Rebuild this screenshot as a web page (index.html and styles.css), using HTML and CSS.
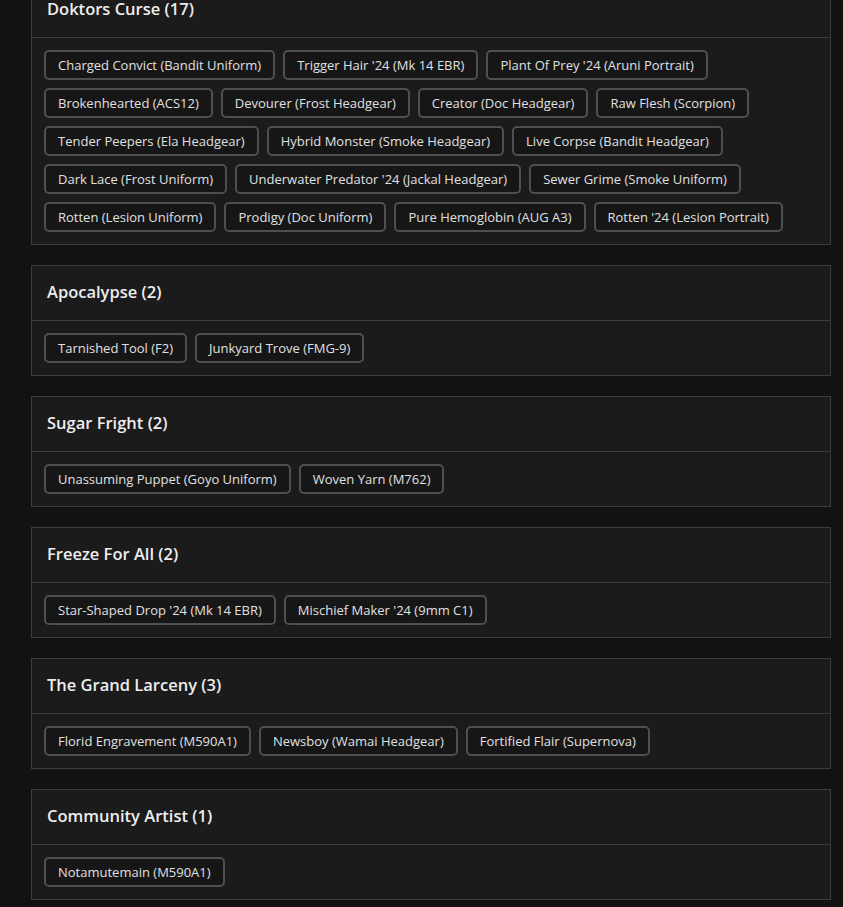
FILE: index.html
```html
<!DOCTYPE html>
<html>
<head>
<meta charset="utf-8">
<link rel="stylesheet" href="styles.css">
</head>
<body>
<main class="list">
  <section class="card">
    <header class="card-head"><h2>Doktors Curse (17)</h2></header>
    <div class="chips">
      <span class="chip">Charged Convict (Bandit Uniform)</span>
      <span class="chip">Trigger Hair '24 (Mk 14 EBR)</span>
      <span class="chip">Plant Of Prey '24 (Aruni Portrait)</span>
      <span class="chip">Brokenhearted (ACS12)</span>
      <span class="chip">Devourer (Frost Headgear)</span>
      <span class="chip">Creator (Doc Headgear)</span>
      <span class="chip">Raw Flesh (Scorpion)</span>
      <span class="chip">Tender Peepers (Ela Headgear)</span>
      <span class="chip">Hybrid Monster (Smoke Headgear)</span>
      <span class="chip">Live Corpse (Bandit Headgear)</span>
      <span class="chip">Dark Lace (Frost Uniform)</span>
      <span class="chip">Underwater Predator '24 (Jackal Headgear)</span>
      <span class="chip">Sewer Grime (Smoke Uniform)</span>
      <span class="chip">Rotten (Lesion Uniform)</span>
      <span class="chip">Prodigy (Doc Uniform)</span>
      <span class="chip">Pure Hemoglobin (AUG A3)</span>
      <span class="chip">Rotten '24 (Lesion Portrait)</span>
    </div>
  </section>
  <section class="card">
    <header class="card-head"><h2>Apocalypse (2)</h2></header>
    <div class="chips">
      <span class="chip">Tarnished Tool (F2)</span>
      <span class="chip">Junkyard Trove (FMG-9)</span>
    </div>
  </section>
  <section class="card">
    <header class="card-head"><h2>Sugar Fright (2)</h2></header>
    <div class="chips">
      <span class="chip">Unassuming Puppet (Goyo Uniform)</span>
      <span class="chip">Woven Yarn (M762)</span>
    </div>
  </section>
  <section class="card">
    <header class="card-head"><h2>Freeze For All (2)</h2></header>
    <div class="chips">
      <span class="chip">Star-Shaped Drop '24 (Mk 14 EBR)</span>
      <span class="chip">Mischief Maker '24 (9mm C1)</span>
    </div>
  </section>
  <section class="card">
    <header class="card-head"><h2>The Grand Larceny (3)</h2></header>
    <div class="chips">
      <span class="chip">Florid Engravement (M590A1)</span>
      <span class="chip">Newsboy (Wamai Headgear)</span>
      <span class="chip">Fortified Flair (Supernova)</span>
    </div>
  </section>
  <section class="card">
    <header class="card-head"><h2>Community Artist (1)</h2></header>
    <div class="chips">
      <span class="chip">Notamutemain (M590A1)</span>
    </div>
  </section>
</main>
</body>
</html>
```

FILE: styles.css
```css
html, body {
  margin: 0;
  padding: 0;
  background: #121212;
  font-family: "Open Sans", "Noto Sans", sans-serif;
  color: #e6e6e6;
}
.list {
  display: flex;
  flex-direction: column;
  gap: 20px;
  width: 800px;
  margin: -18px 0 0 31px;
}
.card {
  background: #1b1b1b;
  border: 1px solid #3d3d3d;
}
.card-head {
  box-sizing: border-box;
  height: 55px;
  display: flex;
  align-items: center;
  padding: 0 15px 3px;
  border-bottom: 1px solid #3d3d3d;
}
.card-head h2 {
  margin: 0;
  font-size: 16.5px;
  font-weight: 600;
  color: #ededed;
}
.chips {
  display: flex;
  flex-wrap: wrap;
  gap: 8px 8px;
  padding: 12px;
}
.chip {
  box-sizing: border-box;
  height: 30px;
  line-height: 26px;
  padding: 0 12px;
  border: 2px solid #4f4f4f;
  border-radius: 5px;
  background: #161616;
  font-size: 13px;
  color: #e0e0e0;
  white-space: nowrap;
}
```
